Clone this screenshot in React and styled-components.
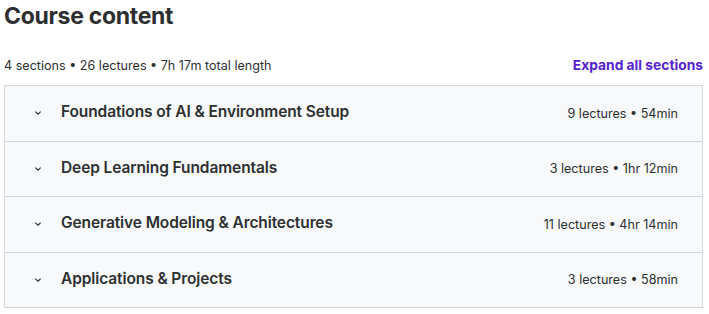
import React from "react";
import styled, { createGlobalStyle } from "styled-components";

const Global = createGlobalStyle`
  html, body { margin: 0; padding: 0; background: #fff; }
  body { font-family: Inter, "Noto Sans", sans-serif; color: #2d2f31; }
`;

const Page = styled.div`
  width: 699px;
  padding: 0 6px 0 4px;
`;

const Title = styled.h2`
  margin: 0;
  font-size: 23px;
  line-height: 32px;
  font-weight: 700;
  letter-spacing: -0.3px;
  color: #2d2f31;
`;

const Meta = styled.div`
  display: flex;
  justify-content: space-between;
  align-items: center;
  margin-top: 22px;
  height: 22px;
`;

const Stats = styled.span`
  font-size: 12.6px;
  color: #2d2f31;
`;

const ExpandAll = styled.button`
  border: 0;
  background: none;
  padding: 0;
  font-family: inherit;
  font-size: 13.8px;
  font-weight: 700;
  color: #5624d0;
  cursor: pointer;
`;

const Box = styled.div`
  margin-top: 9px;
  border: 1px solid #d1d7dc;
  border-bottom: 0;
`;

const Row = styled.div`
  display: flex;
  align-items: center;
  height: 54.5px;
  padding: 0 24px 0 28px;
  background: #f7f9fa;
  border-bottom: 1px solid #d1d7dc;
`;

const Chevron = styled.svg`
  width: 10px;
  height: 10px;
  flex: none;
  margin-right: 18px;
`;

const SectionTitle = styled.span`
  flex: 1;
  font-size: 15.5px;
  font-weight: 600;
  letter-spacing: -0.1px;
  margin-bottom: 3px;
`;

const SectionMeta = styled.span`
  font-size: 12.6px;
`;

const sections = [
  ["Foundations of AI & Environment Setup", "9 lectures • 54min"],
  ["Deep Learning Fundamentals", "3 lectures • 1hr 12min"],
  ["Generative Modeling & Architectures", "11 lectures • 4hr 14min"],
  ["Applications & Projects", "3 lectures • 58min"],
];

export default function App() {
  return (
    <Page>
      <Global />
      <Title>Course content</Title>
      <Meta>
        <Stats>4 sections • 26 lectures • 7h 17m total length</Stats>
        <ExpandAll>Expand all sections</ExpandAll>
      </Meta>
      <Box>
        {sections.map(([t, m]) => (
          <Row key={t}>
            <Chevron viewBox="0 0 10 10">
              <path d="M2.3 3.6 L5 6.2 L7.7 3.6" fill="none" stroke="#2d2f31" strokeWidth="1.1" />
            </Chevron>
            <SectionTitle>{t}</SectionTitle>
            <SectionMeta>{m}</SectionMeta>
          </Row>
        ))}
      </Box>
    </Page>
  );
}
